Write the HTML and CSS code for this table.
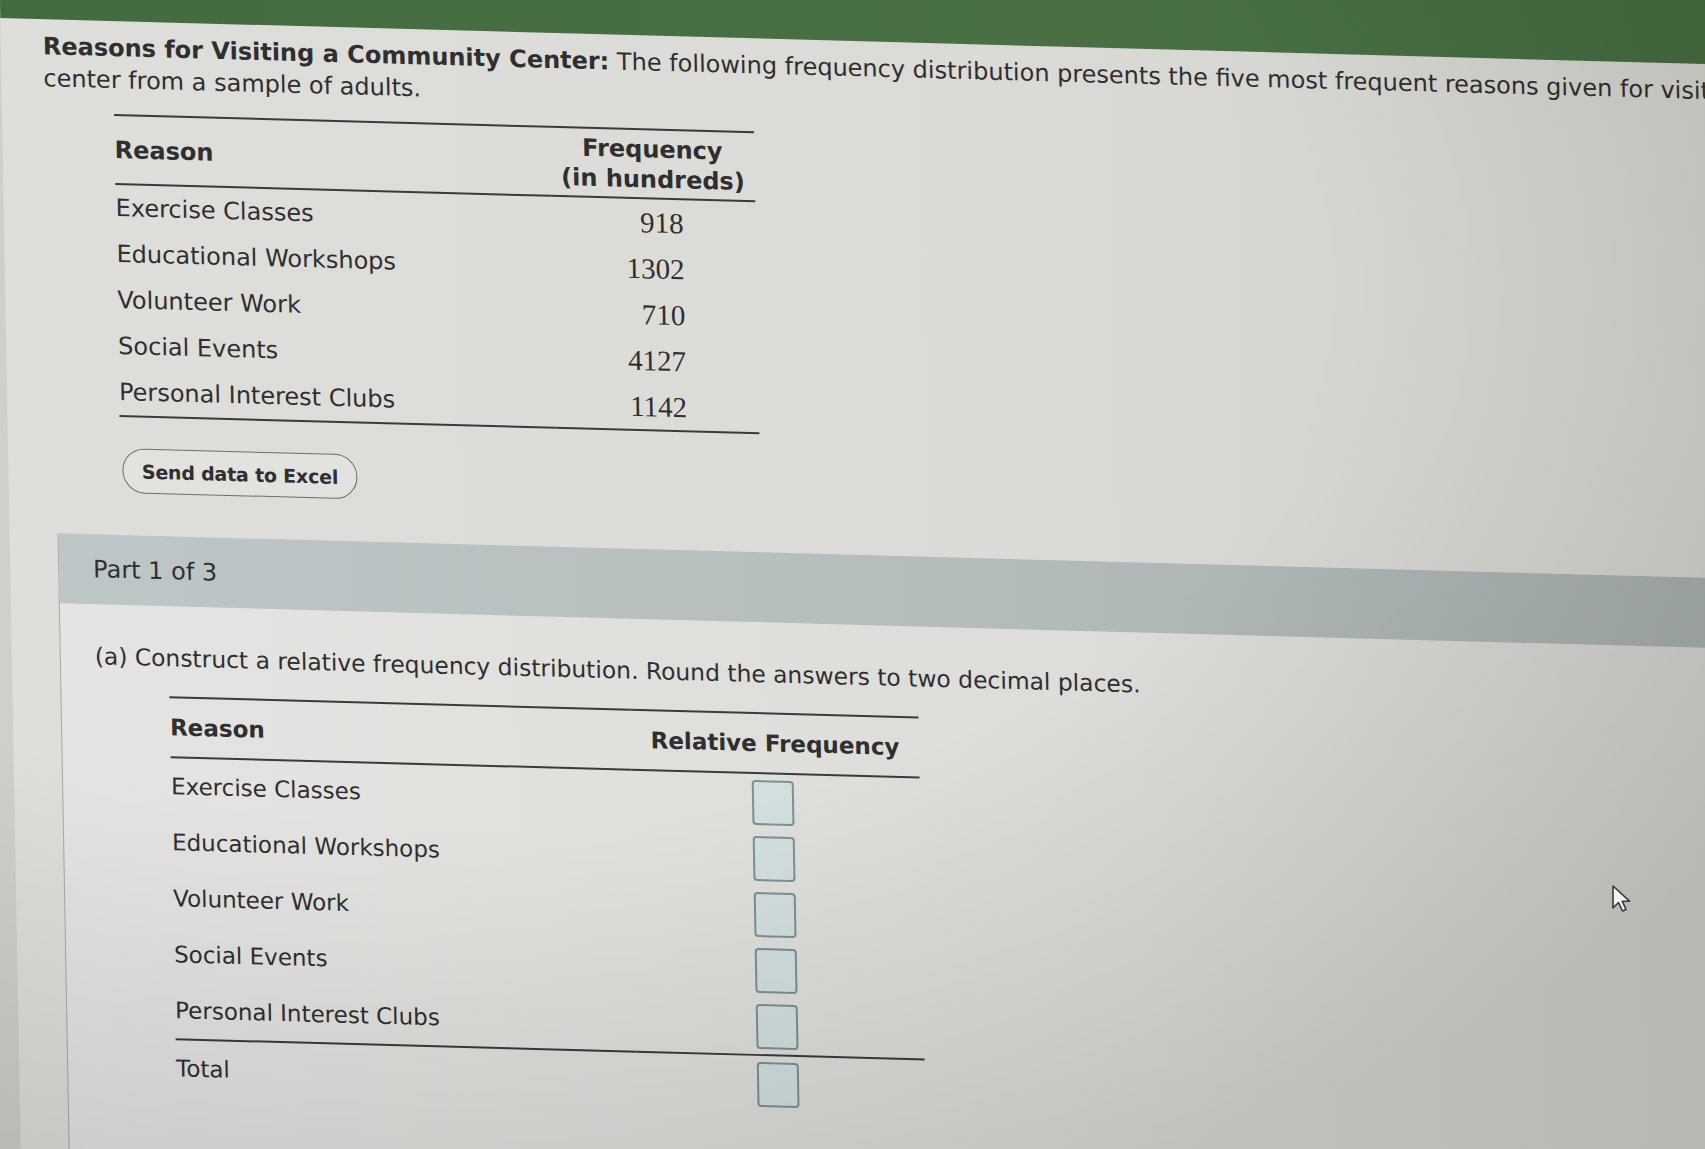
FILE: index.html
```html
<!DOCTYPE html>
<html lang="en">
<head>
<meta charset="utf-8">
<title>Reasons for Visiting a Community Center</title>
<link rel="stylesheet" href="styles.css">
</head>
<body>
<div class="page">
  <div class="topbar"></div>
  <div class="intro">
    <p class="lead"><b>Reasons for Visiting a Community Center:</b> The following frequency distribution presents the five most frequent reasons given for visiting a community<br>center from a sample of adults.</p>
    <table class="freq">
      <thead>
        <tr>
          <th class="c-reason">Reason</th>
          <th class="c-freq">Frequency<br>(in hundreds)</th>
        </tr>
      </thead>
      <tbody>
        <tr><td>Exercise Classes</td><td class="num">918</td></tr>
        <tr><td>Educational Workshops</td><td class="num">1302</td></tr>
        <tr><td>Volunteer Work</td><td class="num">710</td></tr>
        <tr><td>Social Events</td><td class="num">4127</td></tr>
        <tr><td>Personal Interest Clubs</td><td class="num">1142</td></tr>
      </tbody>
    </table>
    <button class="excel" type="button">Send data to Excel</button>
  </div>
  <section class="part">
    <div class="part-head">Part 1 of 3</div>
    <div class="part-body">
      <p class="question">(a) Construct a relative frequency distribution. Round the answers to two decimal places.</p>
      <table class="rel">
        <thead>
          <tr>
            <th class="r-reason">Reason</th>
            <th class="r-freq">Relative Frequency</th>
          </tr>
        </thead>
        <tbody>
          <tr><td>Exercise Classes</td><td class="box-cell"><input class="box" type="text" aria-label="Exercise Classes"></td></tr>
          <tr><td>Educational Workshops</td><td class="box-cell"><input class="box" type="text" aria-label="Educational Workshops"></td></tr>
          <tr><td>Volunteer Work</td><td class="box-cell"><input class="box" type="text" aria-label="Volunteer Work"></td></tr>
          <tr><td>Social Events</td><td class="box-cell"><input class="box" type="text" aria-label="Social Events"></td></tr>
          <tr class="last"><td>Personal Interest Clubs</td><td class="box-cell"><input class="box" type="text" aria-label="Personal Interest Clubs"></td></tr>
          <tr class="total"><td>Total</td><td class="box-cell"><input class="box" type="text" aria-label="Total"></td></tr>
        </tbody>
      </table>
    </div>
  </section>
</div>
<div class="vignette"></div>
<svg class="cursor" width="22" height="30" viewBox="0 0 22 30" aria-hidden="true">
  <path d="M2 2 L2 24 L7.5 18.5 L11.5 27 L15 25.4 L11.2 17.2 L18.5 17.2 Z" fill="#f2f2f2" stroke="#3a3a3a" stroke-width="1.6" stroke-linejoin="round"/>
</svg>
</body>
</html>
```

FILE: styles.css
```css
html, body {
  margin: 0;
  padding: 0;
  width: 100%;
  height: 100%;
  overflow: hidden;
}

body {
  background: #cfcfcb;
  font-family: "DejaVu Sans", Verdana, sans-serif;
  color: #2f2f2f;
  position: relative;
}

.page {
  width: 1820px;
  min-height: 1320px;
  margin-top: -70px;
  transform: matrix(1, 0.027, 0.018, 1, 0, 0);
  transform-origin: 0 70px;
  background: linear-gradient(to right, #dededa 0%, #dadad6 55%, #d0d0ca 100%);
}

.topbar {
  height: 88px;
  background: linear-gradient(to right, #446b40 0%, #4a6f45 60%, #436a3f 100%);
}

.intro {
  padding: 11px 0 0 42px;
}

.lead {
  margin: 0;
  font-size: 24px;
  line-height: 32px;
  white-space: nowrap;
}

.lead b {
  font-weight: bold;
}

/* first table */
.freq {
  margin: 18px 0 0 70px;
  width: 640px;
  border-collapse: collapse;
  font-size: 24px;
}

.freq th {
  font-weight: bold;
  line-height: 30px;
  padding: 4px 0 3px;
  border-top: 2px solid #3a3a3a;
  border-bottom: 2px solid #3a3a3a;
  vertical-align: middle;
}

.freq .c-reason {
  text-align: left;
  width: 436px;
}

.freq .c-freq {
  text-align: center;
  width: 204px;
}

.freq td {
  height: 46px;
  padding: 0;
  vertical-align: middle;
}

.freq .num {
  font-family: "Liberation Serif", "Times New Roman", serif;
  font-size: 29px;
  text-align: right;
  padding-right: 72px;
}

.freq tbody tr:last-child td {
  border-bottom: 2px solid #3a3a3a;
  height: 46px;
}

.excel {
  display: block;
  margin: 31px 0 0 72px;
  width: 235px;
  height: 45px;
  border: 1.5px solid #6e6e6e;
  border-radius: 23px;
  background: #e2e2de;
  font-family: "DejaVu Sans", Verdana, sans-serif;
  font-weight: bold;
  font-size: 19px;
  color: #2f2f2f;
  padding: 0;
  letter-spacing: -0.2px;
}

/* part section */
.part {
  margin: 42px 0 0 48px;
  border-left: 1.5px solid #a9a9a6;
  min-height: 700px;
  background: linear-gradient(to right, #e4e4e2 0%, #dcdcd8 60%, #cfcfca 100%);
}

.part-head {
  height: 70px;
  display: flex;
  align-items: center;
  padding-left: 34px;
  font-size: 24px;
  background: linear-gradient(to right, #bec7c7 0%, #b4bdbc 50%, #a3aba9 100%);
}

.part-body {
  padding: 36px 0 0 34px;
}

.question {
  margin: 0;
  font-size: 23.4px;
  line-height: 32px;
  white-space: nowrap;
}

.rel {
  margin: 22px 0 0 74px;
  width: 749px;
  border-collapse: collapse;
  font-size: 23px;
}

.rel th {
  font-weight: bold;
  height: 58px;
  padding: 0;
  line-height: 30px;
  border-top: 2px solid #3a3a3a;
  border-bottom: 2px solid #3a3a3a;
  vertical-align: middle;
}

.rel .r-reason {
  text-align: left;
  width: 461px;
}

.rel .r-freq {
  text-align: center;
  width: 288px;
}

.rel td {
  height: 56px;
  padding: 0;
  vertical-align: middle;
}

.rel tr.last td {
  border-bottom: 2px solid #3a3a3a;
}

.box-cell {
  text-align: center;
}

.box {
  display: inline-block;
  vertical-align: middle;
  box-sizing: border-box;
  width: 42px;
  height: 45px;
  margin: 0 6px 0 0;
  padding: 0;
  border: 2px solid #7b9292;
  border-radius: 4px;
  background: #d3dfdf;
}

.vignette {
  position: absolute;
  inset: 0;
  pointer-events: none;
  background: radial-gradient(ellipse 90% 85% at 28% 25%, rgba(0, 0, 0, 0) 55%, rgba(0, 0, 0, 0.12) 100%);
}

.cursor {
  position: absolute;
  left: 1611px;
  top: 884px;
}
```
